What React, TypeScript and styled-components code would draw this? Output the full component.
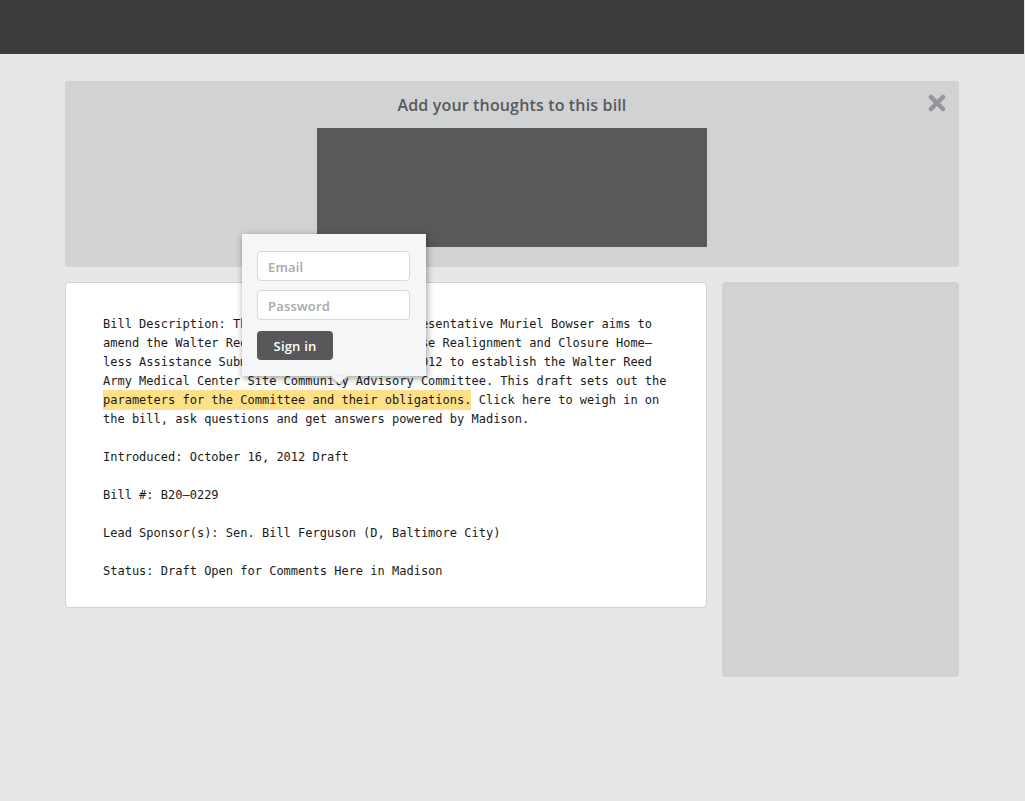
import React from "react";
import styled, { createGlobalStyle } from "styled-components";

const GlobalStyle = createGlobalStyle`
	html, body {
		margin: 0;
		padding: 0;
		background: #e6e7e9;
	}
	body {
		font-family: "Open Sans", "Noto Sans", sans-serif;
	}
	* {
		box-sizing: border-box;
	}
`;

const Page = styled.div`
	width: 1024px;
	min-height: 801px;
	background: #e6e7e9;
`;

const TopBar = styled.header`
	height: 54px;
	background: #3d3d3f;
`;

const Main = styled.main`
	position: relative;
	width: 894px;
	margin: 27px 0 0 65px;
	display: flex;
	flex-direction: column;
	gap: 15px;
`;

const ThoughtsPanel = styled.section`
	position: relative;
	height: 186px;
	background: #d1d2d4;
	border-radius: 3px;
	padding: 14px 0 20px;
	display: flex;
	flex-direction: column;
	align-items: center;
`;

const PanelTitle = styled.h2`
	margin: 0 0 13px;
	font-size: 16px;
	line-height: 20px;
	font-weight: 600;
	color: #58595b;
	letter-spacing: 0.15px;
`;

const MediaBlock = styled.div`
	width: 390px;
	height: 119px;
	background: #59595b;
`;

const CloseButton = styled.button`
	position: absolute;
	top: 12px;
	right: 12px;
	width: 20px;
	height: 20px;
	padding: 0;
	border: none;
	background: transparent;
	cursor: pointer;
	display: flex;
	align-items: center;
	justify-content: center;
`;

const ContentRow = styled.div`
	display: flex;
	gap: 15px;
	align-items: flex-start;
`;

const BillCard = styled.article`
	width: 642px;
	height: 326px;
	background: #fff;
	border: 1px solid #d1d2d4;
	border-radius: 4px;
	padding: 32px 20px 0 37px;
	font-family: "DejaVu Sans Mono", "Liberation Mono", monospace;
	font-size: 12px;
	line-height: 19px;
	color: #1a1a1a;
`;

const Para = styled.p`
	margin: 0 0 19px;
	white-space: nowrap;
`;

const Highlight = styled.span`
	background: #fde087;
	padding: 3px 0;
`;

const Sidebar = styled.aside`
	width: 237px;
	height: 395px;
	background: #d1d2d4;
	border-radius: 4px;
`;

const Popover = styled.div`
	position: absolute;
	left: 177px;
	top: 153px;
	width: 184px;
	height: 142px;
	background: #f5f6f7;
	padding: 17px 15px 16px;
	box-shadow: 1px 2px 7px rgba(0, 0, 0, 0.4);
	display: flex;
	flex-direction: column;
	gap: 9px;
	z-index: 10;

	&::after {
		content: "";
		position: absolute;
		left: 89px;
		bottom: -8px;
		width: 0;
		height: 0;
		border-left: 8px solid transparent;
		border-right: 8px solid transparent;
		border-top: 8px solid #f5f6f7;
		filter: drop-shadow(1px 2px 2px rgba(0, 0, 0, 0.35));
	}
`;

const Field = styled.input`
	width: 153px;
	height: 30px;
	border: 1px solid #d6d7d9;
	border-radius: 4px;
	background: #fff;
	padding: 1px 10px 0;
	font-family: "Open Sans", "Noto Sans", sans-serif;
	font-size: 13px;
	font-weight: 600;
	letter-spacing: 0.2px;
	color: #58595b;
	outline: none;

	&::placeholder {
		color: #a7a9ac;
	}
`;

const SignIn = styled.button`
	margin-top: 2px;
	width: 76px;
	height: 29px;
	border: none;
	border-radius: 4px;
	background: #58585a;
	color: #fff;
	font-family: "Open Sans", "Noto Sans", sans-serif;
	font-size: 13px;
	font-weight: 600;
	letter-spacing: 0.2px;
	cursor: pointer;
`;

const CloseIcon = () => (
	<svg width="18" height="18" viewBox="0 0 18 18">
		<path
			d="M3 3 L15 15 M15 3 L3 15"
			stroke="#939598"
			strokeWidth="4.5"
			strokeLinecap="round"
		/>
	</svg>
);

export default function App() {
	return (
		<Page>
			<GlobalStyle />
			<TopBar />
			<Main>
				<ThoughtsPanel>
					<PanelTitle>Add your thoughts to this bill</PanelTitle>
					<MediaBlock />
					<CloseButton aria-label="Close">
						<CloseIcon />
					</CloseButton>
				</ThoughtsPanel>
				<ContentRow>
					<BillCard>
						<Para>
							Bill Description: This legislation from Representative Muriel Bowser aims to
							<br />
							amend the Walter Reed Army Medical Center Base Realignment and Closure Home–
							<br />
							less Assistance Submission Approval Act of 2012 to establish the Walter Reed
							<br />
							Army Medical Center Site Community Advisory Committee. This draft sets out the
							<br />
							<Highlight>parameters for the Committee and their obligations.</Highlight> Click here to weigh in on
							<br />
							the bill, ask questions and get answers powered by Madison.
						</Para>
						<Para>Introduced: October 16, 2012 Draft</Para>
						<Para>Bill #: B20–0229</Para>
						<Para>Lead Sponsor(s): Sen. Bill Ferguson (D, Baltimore City)</Para>
						<Para>Status: Draft Open for Comments Here in Madison</Para>
					</BillCard>
					<Sidebar />
				</ContentRow>
				<Popover>
					<Field placeholder="Email" />
					<Field type="password" placeholder="Password" />
					<SignIn>Sign in</SignIn>
				</Popover>
			</Main>
		</Page>
	);
}
